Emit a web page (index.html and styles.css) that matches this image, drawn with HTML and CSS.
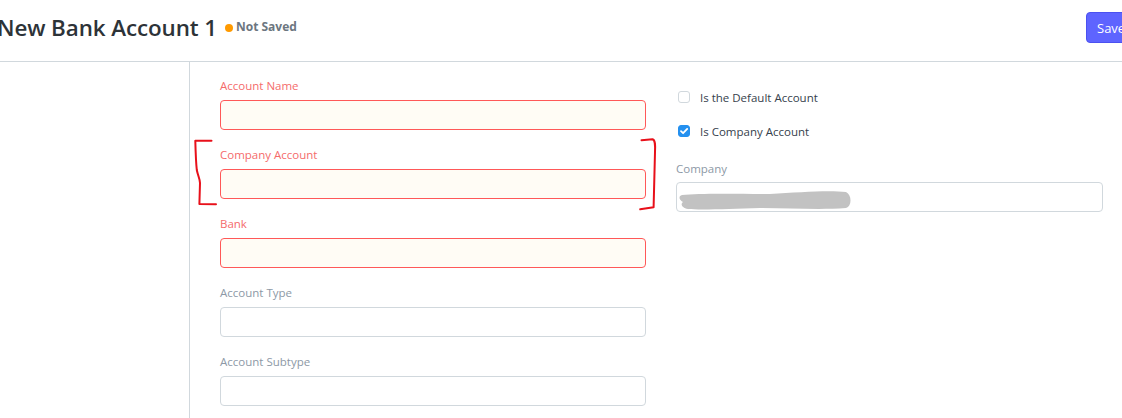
FILE: index.html
```html
<!DOCTYPE html>
<html>
<head>
<meta charset="utf-8">
<link rel="stylesheet" href="styles.css">
</head>
<body>
<header class="page-head">
  <div class="title-wrap">
    <h1 class="title">New Bank Account 1</h1>
    <span class="dot"></span>
    <span class="status">Not Saved</span>
  </div>
  <button class="btn-save">Save</button>
</header>
<div class="layout">
  <aside class="sidebar"></aside>
  <main class="form">
    <section class="col">
      <div class="field">
        <label class="lbl lbl-req">Account Name</label>
        <div class="input input-req"></div>
      </div>
      <div class="field">
        <label class="lbl lbl-req">Company Account</label>
        <div class="input input-req"></div>
      </div>
      <div class="field">
        <label class="lbl lbl-req">Bank</label>
        <div class="input input-req"></div>
      </div>
      <div class="field">
        <label class="lbl">Account Type</label>
        <div class="input"></div>
      </div>
      <div class="field">
        <label class="lbl">Account Subtype</label>
        <div class="input"></div>
      </div>
    </section>
    <section class="col col-right">
      <div class="check-row">
        <span class="cb"></span>
        <span class="cb-label">Is the Default Account</span>
      </div>
      <div class="check-row">
        <span class="cb cb-on"><svg viewBox="0 0 12 12" width="12" height="12"><path d="M3 6.2 L5.1 8.2 L9.2 3.9" fill="none" stroke="#fff" stroke-width="1.8" stroke-linecap="round" stroke-linejoin="round"/></svg></span>
        <span class="cb-label">Is Company Account</span>
      </div>
      <div class="field field-company">
        <label class="lbl">Company</label>
        <div class="input input-plain"></div>
      </div>
    </section>
  </main>
</div>
<svg class="overlay" width="1122" height="418" viewBox="0 0 1122 418">
  <g fill="none" stroke="#e8101a" stroke-width="2" stroke-linecap="round" stroke-linejoin="round">
    <path d="M211.5 140.8 L195.3 140.8 C195.6 152 196 163 196.8 170 C198 176 200 179 200 183 L199.4 204 L216 204.3"/>
    <path d="M641.5 140.2 L652.5 139.3 C655.5 140 655.3 146 655 152 L654.3 180 L653.6 207.2 L640.2 209.3"/>
  </g>
  <path d="M682 195 C700 193 740 194 770 194 C800 192 830 190 846 192 C852 195 852 206 846 208 C820 210 790 208 760 208 C730 209 700 210 688 209 C682 208 680 204 683 202 C678 199 679 196 682 195 Z" fill="#c2c2c2"/>
</svg>
</body>
</html>
```
FILE: styles.css
```css
* { box-sizing: border-box; }
html, body { margin: 0; padding: 0; background: #fff; }
body {
  font-family: "Open Sans", "Noto Sans", "Liberation Sans", sans-serif;
  color: #36414c;
  width: 1122px;
  height: 418px;
  overflow: hidden;
  position: relative;
}
.page-head {
  height: 62px;
  border-bottom: 1px solid #d1d8dd;
  display: flex;
  align-items: flex-start;
  justify-content: space-between;
}
.title-wrap {
  display: flex;
  align-items: center;
  margin-left: -3px;
  margin-top: 12px;
}
.title {
  margin: 0;
  font-size: 22.4px;
  font-weight: 600;
  color: #2d3338;
  line-height: 32px;
  letter-spacing: -0.1px;
}
.dot {
  width: 8px;
  height: 8px;
  border-radius: 50%;
  background: #ff9a00;
  margin-left: 8px;
  margin-top: -1px;
}
.status {
  font-size: 12px;
  font-weight: 700;
  color: #6c7680;
  margin-left: 3px;
  margin-top: -3px;
}
.btn-save {
  margin-top: 12px;
  margin-right: -20px;
  width: 56px;
  height: 31px;
  background: #5e64ff;
  border: 1px solid #4b51f0;
  border-radius: 4px;
  color: #fff;
  font-family: inherit;
  font-size: 13px;
  text-align: left;
  padding: 0 10px;
}
.layout {
  display: flex;
  height: 356px;
}
.sidebar {
  width: 190px;
  border-right: 1px solid #d1d8dd;
  flex: none;
}
.form {
  display: flex;
  gap: 30px;
  padding: 15px 0 0 30px;
}
.col { width: 426px; flex: none; }
.col-right { width: 427px; padding-top: 3px; }
.field { margin-bottom: 16px; }
.lbl {
  display: block;
  font-size: 11.5px;
  line-height: 18px;
  color: #8d99a6;
  margin-bottom: 5px;
}
.lbl-req { color: #f56b6b; }
.input {
  height: 30px;
  border: 1px solid #d1d8dd;
  border-radius: 4px;
  background: #fff;
}
.input-req {
  border-color: #ff5858;
  background: #fffcf5;
}
.check-row {
  height: 34px;
  display: flex;
  align-items: center;
  padding-left: 2px;
}
.cb {
  width: 12px;
  height: 12px;
  border: 1px solid #d1d8dd;
  border-radius: 3px;
  background: #fff;
  flex: none;
  display: flex;
}
.cb-on {
  background: #2490ef;
  border-color: #2490ef;
}
.cb-on svg { margin: -1px; }
.cb-label {
  font-size: 11.5px;
  color: #36414c;
  margin-left: 10px;
}
.field-company { margin-top: 12px; }
.field-company .lbl { margin-bottom: 4px; }
.overlay {
  position: absolute;
  left: 0;
  top: 0;
  pointer-events: none;
}
```
